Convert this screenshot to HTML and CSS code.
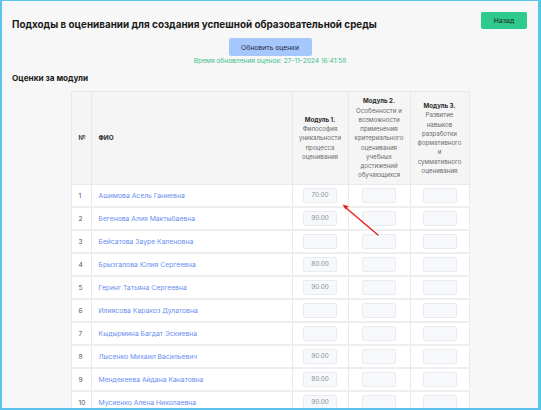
FILE: index.html
```html
<!DOCTYPE html>
<html lang="ru">
<head>
<meta charset="utf-8">
<title>Оценки за модули</title>
<link rel="stylesheet" href="styles.css">
</head>
<body>
<div class="frame">
  <div class="top">
    <h1 class="title">Подходы в оценивании для создания успешной образовательной среды</h1>
    <button class="back">Назад</button>
  </div>
  <div class="refresh">
    <button class="refresh-btn">Обновить оценки</button>
    <div class="time">Время обновления оценок: 27-11-2024 16:41:58</div>
  </div>
  <h2 class="subtitle">Оценки за модули</h2>
  <table class="grades">
    <colgroup>
      <col class="c-num"><col class="c-name"><col class="c-m1"><col class="c-m2"><col class="c-m3">
    </colgroup>
    <thead>
      <tr>
        <th class="h-left">№</th>
        <th class="h-left">ФИО</th>
        <th class="h-mod"><b>Модуль 1.</b><br>Философия уникальности процесса оценивания</th>
        <th class="h-mod"><b>Модуль 2.</b><br>Особенности и возможности применения критериального оценивания учебных достижений обучающихся</th>
        <th class="h-mod h-m3"><b>Модуль 3.</b><br>Развитие навыков разработки формативного и суммативного оценивания</th>
      </tr>
    </thead>
    <tbody>
      <tr><td class="num">1</td><td class="name">Ашимова Асель Ганиевна</td><td><div class="inp">70.00</div></td><td><div class="inp"></div></td><td><div class="inp"></div></td></tr>
      <tr><td class="num">2</td><td class="name">Бегенова Алия Мактыбаевна</td><td><div class="inp">90.00</div></td><td><div class="inp"></div></td><td><div class="inp"></div></td></tr>
      <tr><td class="num">3</td><td class="name">Бейсатова Зауре Капеновна</td><td><div class="inp"></div></td><td><div class="inp"></div></td><td><div class="inp"></div></td></tr>
      <tr><td class="num">4</td><td class="name">Брызгалова Юлия Сергеевна</td><td><div class="inp">80.00</div></td><td><div class="inp"></div></td><td><div class="inp"></div></td></tr>
      <tr><td class="num">5</td><td class="name">Геринг Татьяна Сергеевна</td><td><div class="inp">90.00</div></td><td><div class="inp"></div></td><td><div class="inp"></div></td></tr>
      <tr><td class="num">6</td><td class="name">Илиясова Каракоз Дулатовна</td><td><div class="inp"></div></td><td><div class="inp"></div></td><td><div class="inp"></div></td></tr>
      <tr><td class="num">7</td><td class="name">Кыдырмина Багдат Эскиевна</td><td><div class="inp"></div></td><td><div class="inp"></div></td><td><div class="inp"></div></td></tr>
      <tr><td class="num">8</td><td class="name">Лысенко Михаил Васильевич</td><td><div class="inp">90.00</div></td><td><div class="inp"></div></td><td><div class="inp"></div></td></tr>
      <tr><td class="num">9</td><td class="name">Мендекеева Айдана Канатовна</td><td><div class="inp">80.00</div></td><td><div class="inp"></div></td><td><div class="inp"></div></td></tr>
      <tr><td class="num">10</td><td class="name">Мусиенко Алена Николаевна</td><td><div class="inp">90.00</div></td><td><div class="inp"></div></td><td><div class="inp"></div></td></tr>
    </tbody>
  </table>
  <svg class="arrow" width="541" height="410" viewBox="0 0 541 410">
    <line x1="378" y1="235" x2="345" y2="207" stroke="#e8231f" stroke-width="1.4" stroke-linecap="round"/>
    <path d="M342.5 204.6 L348.6 206.2 L345.6 209.6 Z" fill="#e8231f"/>
  </svg>
</div>
</body>
</html>
```

FILE: styles.css
```css
html, body {
  margin: 0;
  padding: 0;
  background: #f7f7f7;
}
body {
  width: 541px;
  height: 410px;
  overflow: hidden;
  font-family: Inter, "Noto Sans", "DejaVu Sans", sans-serif;
  color: #1f1f1f;
}
.frame {
  position: relative;
  box-sizing: border-box;
  width: 541px;
  height: 410px;
  overflow: hidden;
  border-top: 1px solid #5cc3ee;
  border-left: 2px solid #5cc3ee;
  border-right: 3px solid #5cc3ee;
  border-bottom: 2px solid #5cc3ee;
  background: #f7f7f7;
}
.top {
  display: flex;
  justify-content: space-between;
  align-items: flex-start;
  padding: 11px 11px 0 10px;
}
.title {
  margin: 6px 0 0 0;
  font-size: 9.9px;
  line-height: 12px;
  font-weight: 700;
  color: #1a1a1a;
  letter-spacing: 0;
}
.back {
  width: 46px;
  height: 17px;
  border: none;
  border-radius: 2px;
  background: #2ec98c;
  color: #1f3a2e;
  font-family: inherit;
  font-size: 6.8px;
  font-weight: 500;
  padding: 0;
}
.refresh {
  display: flex;
  flex-direction: column;
  align-items: center;
  margin-top: 8px;
}
.refresh-btn {
  width: 83px;
  height: 18px;
  border: none;
  border-radius: 2px;
  background: #a6c7fb;
  color: #1f2a44;
  font-family: inherit;
  font-size: 6.8px;
  padding: 0;
}
.time {
  margin-top: 1px;
  font-size: 6.6px;
  line-height: 9px;
  color: #3cbd8c;
}
.subtitle {
  margin: 7px 0 0 10px;
  font-size: 8.2px;
  line-height: 10px;
  font-weight: 700;
  color: #1a1a1a;
}
.grades {
  margin: 8px auto 0 auto;
  width: 398px;
  border-collapse: collapse;
  table-layout: fixed;
  background: #ffffff;
}
.c-num { width: 20px; }
.c-name { width: 201px; }
.c-m1 { width: 56px; }
.c-m2 { width: 62px; }
.c-m3 { width: 59px; }
.grades th, .grades td {
  border: 1px solid #e9e9e9;
  padding: 0;
}
.grades thead th {
  background: #f5f5f5;
  height: 93px;
  box-sizing: border-box;
  vertical-align: middle;
}
.h-left {
  text-align: left;
  padding-left: 7px !important;
  font-size: 6.4px;
  font-weight: 700;
  color: #2a2a2a;
}
.h-mod {
  text-align: center;
  font-size: 6.2px;
  line-height: 9.25px;
  font-weight: 400;
  color: #6a6a6a;
  padding: 4px 3px !important;
}
.h-m3 {
  padding: 4px 7px !important;
}
.h-mod b {
  color: #2a2a2a;
  font-weight: 700;
}
.grades tbody td {
  height: 21px;
  border-bottom: 2px solid #eeeeee;
  vertical-align: middle;
}
.num {
  padding-left: 7px !important;
  font-size: 6.6px;
  color: #555555;
}
.name {
  padding-left: 7px !important;
  font-size: 6.8px;
  color: #6b8ff0;
  white-space: nowrap;
}
.inp {
  box-sizing: border-box;
  width: 34px;
  height: 15px;
  margin: 0 auto;
  background: #f6f8fb;
  border: 1px solid #e8ecf1;
  border-radius: 2px;
  font-size: 6.4px;
  line-height: 13px;
  text-align: center;
  color: #8d8f94;
}
.arrow {
  position: absolute;
  left: -2px;
  top: -1px;
  pointer-events: none;
}
```
